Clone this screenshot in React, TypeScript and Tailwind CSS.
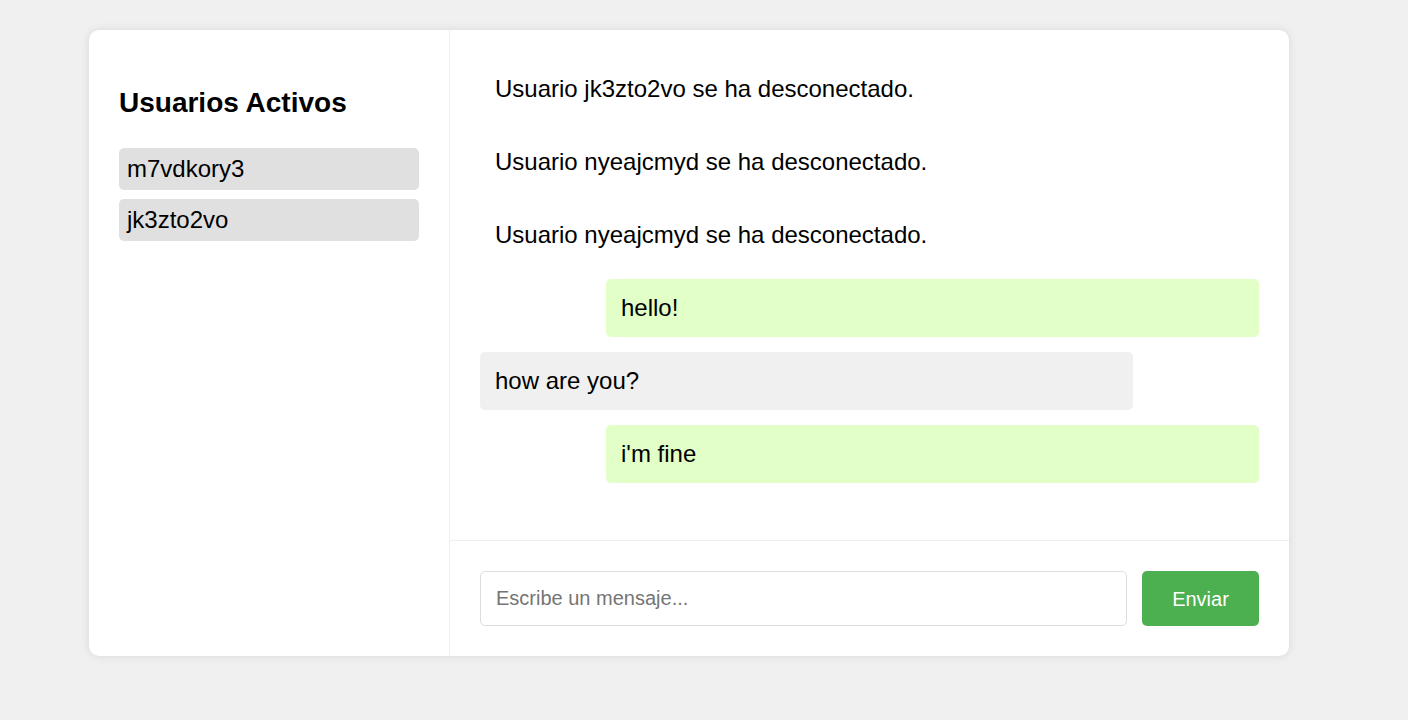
const users = ["m7vdkory3", "jk3zto2vo"]

type Msg = { text: string; kind: "system" | "mine" | "other" }

const messages: Msg[] = [
  { text: "Usuario jk3zto2vo se ha desconectado.", kind: "system" },
  { text: "Usuario nyeajcmyd se ha desconectado.", kind: "system" },
  { text: "Usuario nyeajcmyd se ha desconectado.", kind: "system" },
  { text: "hello!", kind: "mine" },
  { text: "how are you?", kind: "other" },
  { text: "i'm fine", kind: "mine" },
]

const App = () => {
  return (
    <div className="min-h-screen w-full bg-[#f0f0f0] pt-[30px] pl-[89px] font-['Liberation_Sans',Arial,sans-serif] text-black">
      <div className="flex h-[626px] w-[1200px] overflow-hidden rounded-[10px] bg-white shadow-[0_0_10px_rgba(0,0,0,0.1)]">

        {/* sidebar */}
        <aside className="w-[361px] shrink-0 border-r border-[#eeeeee] px-[30px] pt-[57px]">
          <h2 className="text-[28px] font-bold leading-[32px]">Usuarios Activos</h2>
          <ul className="mt-[29px] flex flex-col gap-[9px]">
            {users.map((u) => (
              <li key={u} className="flex h-[42px] items-center rounded-[5px] bg-[#e0e0e0] px-2 text-[24px]">
                {u}
              </li>
            ))}
          </ul>
        </aside>

        {/* chat */}
        <section className="flex flex-1 flex-col">
          <div className="flex flex-1 flex-col gap-[15px] p-[30px]">
            {messages.map((m, i) => (
              <div
                key={i}
                className={
                  m.kind === "system"
                    ? "flex h-[58px] items-center px-[15px] text-[24px]"
                    : m.kind === "mine"
                    ? "flex h-[58px] w-[653px] items-center self-end rounded-[5px] bg-[#e1ffc7] px-[15px] text-[24px]"
                    : "flex h-[58px] w-[653px] items-center self-start rounded-[5px] bg-[#f0f0f0] px-[15px] text-[24px]"
                }
              >
                {m.text}
              </div>
            ))}
          </div>

          <div className="flex gap-[15px] border-t border-[#eeeeee] p-[30px]">
            <input
              type="text"
              placeholder="Escribe un mensaje..."
              className="h-[55px] flex-1 rounded-[5px] border border-[#dddddd] px-[15px] text-[20px] outline-none placeholder:text-[#757575]"
            />
            <button className="h-[55px] w-[117px] rounded-[5px] bg-[#4caf50] text-[20px] text-white">
              Enviar
            </button>
          </div>
        </section>
      </div>
    </div>
  )
}

export default App
